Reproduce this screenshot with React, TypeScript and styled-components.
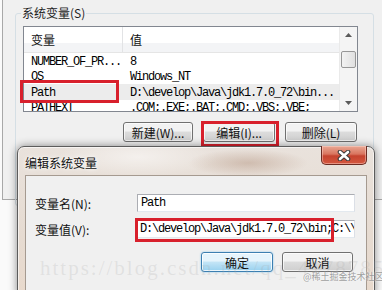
import styled, { createGlobalStyle, css } from 'styled-components';

const GlobalStyle = createGlobalStyle`
  body {
    margin: 0;
    background: #ffffff;
  }
`;

const cjk = `'Noto Sans CJK SC', 'Noto Sans', sans-serif`;
const mono = `'Liberation Mono', 'DejaVu Sans Mono', monospace`;

const Screen = styled.div`
  position: relative;
  width: 382px;
  height: 290px;
  overflow: hidden;
  background: #fafafa;
  font-family: ${cjk};
  font-size: 12px;
  color: #000;
`;

const EnvWindow = styled.div`
  margin-left: 2px;
  width: 392px;
  height: 200px;
  box-sizing: border-box;
  border-left: 1px solid #a8a8a8;
  border-bottom: 1px solid #a8a8a8;
  background: #f0f0f0;
  padding-top: 6px;
`;

const GroupBox = styled.fieldset`
  margin: 0 0 0 12px;
  width: 359px;
  height: 200px;
  box-sizing: border-box;
  padding: 0;
  border: 1px solid #d5dfe5;
  border-radius: 3px;
`;

const Legend = styled.legend`
  margin-left: 5px;
  padding: 0 1px;
  font-size: 12px;
  line-height: 14px;
  color: #1e1e1e;
`;

const ListBox = styled.div`
  display: flex;
  margin: 6px 0 0 7px;
  width: 335px;
  height: 86px;
  box-sizing: border-box;
  border: 1px solid #828790;
  background: #fff;
`;

const Table = styled.div`
  flex: 1;
  overflow: hidden;
`;

const HeaderRow = styled.div`
  display: grid;
  grid-template-columns: 99px 1fr;
  height: 25px;
  background: linear-gradient(#ffffff 0 64%, #f3f4f6 64% 100%);
  border-bottom: 1px solid #e5e5e5;
`;

const HeaderCell = styled.div<{ $divider?: boolean }>`
  display: flex;
  align-items: center;
  padding: 0 0 0 7px;
  font-size: 12px;
  color: #111;
  ${(p) =>
    p.$divider &&
    css`
      border-right: 1px solid #e2e3e5;
    `}
`;

const Row = styled.div<{ $selected?: boolean }>`
  display: grid;
  grid-template-columns: 99px 1fr;
  height: 15.5px;
  align-items: center;
  background: ${(p) => (p.$selected ? '#ececec' : 'transparent')};
`;

const Cell = styled.div`
  padding: 2px 0 0 7px;
  font-family: ${mono};
  font-size: 12px;
  letter-spacing: -1.2px;
  white-space: nowrap;
  overflow: hidden;
  line-height: 14px;
`;

const ScrollBar = styled.div`
  display: flex;
  flex-direction: column;
  width: 17px;
  background: #f4f4f4;
  border-left: 1px solid #eaeaea;
`;

const ScrollArrow = styled.div`
  height: 16px;
  display: flex;
  align-items: center;
  justify-content: center;
`;

const ScrollTrack = styled.div`
  flex: 1;
  padding-top: 8px;
`;

const Thumb = styled.div`
  margin: 0 1px;
  height: 15px;
  border: 1px solid #979797;
  border-radius: 2px;
  background: linear-gradient(90deg, #f3f3f3, #e0e0e0);
`;

const ButtonRow = styled.div<{ $gap: number }>`
  display: flex;
  justify-content: flex-end;
  gap: ${(p) => p.$gap}px;
`;

const WinButton = styled.div<{ $w: number; $default?: boolean }>`
  width: ${(p) => p.$w}px;
  height: 20px;
  box-sizing: border-box;
  display: flex;
  align-items: center;
  justify-content: center;
  border: 1px solid #707070;
  border-radius: 3px;
  font-size: 12px;
  color: #111;
  background: linear-gradient(#f2f2f2 0 45%, #dcdcdc 50%, #cfcfcf 100%);
  box-shadow: inset 0 0 0 1px rgba(255, 255, 255, 0.7);
  ${(p) =>
    p.$default &&
    css`
      border-color: #3c7fb1;
      background: linear-gradient(#e5f4fc 0 45%, #c4e5f6 50%, #98d1ef 100%);
      box-shadow: inset 0 0 0 1px rgba(255, 255, 255, 0.8), 0 0 2px #7ec3ec;
    `}
`;

const EnvButtons = styled(ButtonRow)`
  width: 335px;
  margin: 10px 0 0 7px;
  padding-right: 1px;
  box-sizing: border-box;
`;

const Dialog = styled.div`
  position: absolute;
  left: 17px;
  top: 146px;
  width: 358px;
  height: 150px;
  box-sizing: border-box;
  border: 1px solid #5c5c5c;
  border-radius: 7px 7px 0 0;
  padding: 0 7px 5px;
  background:
    radial-gradient(ellipse 60px 14px at 230px 16px, rgba(160, 120, 95, 0.35), transparent),
    radial-gradient(ellipse 80px 20px at 120px 10px, rgba(255, 255, 255, 0.5), transparent),
    linear-gradient(#e9e2dc, #e6dbd1 60%, #e8d9cc);
  box-shadow: 0 0 8px rgba(0, 0, 0, 0.45), inset 0 0 0 1px rgba(255, 255, 255, 0.6);
`;

const TitleBar = styled.div`
  display: flex;
  justify-content: space-between;
  height: 28px;
`;

const Title = styled.div`
  padding-top: 7px;
  font-size: 12px;
  color: #111;
  text-shadow: 0 0 6px #fff, 0 0 3px #fff;
`;

const CloseButton = styled.div`
  width: 46px;
  height: 19px;
  margin-top: -1px;
  box-sizing: border-box;
  display: flex;
  align-items: center;
  justify-content: center;
  border: 1px solid #6b2b22;
  border-top: none;
  border-radius: 0 0 5px 5px;
  background: linear-gradient(#e9a894 0%, #d9745e 45%, #c5432e 55%, #d4573f 100%);
  box-shadow: inset 0 0 0 1px rgba(255, 220, 210, 0.45);
`;

const ClientArea = styled.div`
  border: 1px solid #a59a90;
  background: #f0f0f0;
  padding: 18px 11px 20px 9px;
`;

const FormGrid = styled.div`
  display: grid;
  grid-template-columns: 1fr 218px;
  row-gap: 8px;
  align-items: center;
`;

const Label = styled.div`
  font-size: 12px;
  color: #111;
`;

const TextBox = styled.div`
  height: 18px;
  box-sizing: border-box;
  display: flex;
  align-items: center;
  padding-left: 3px;
  border: 1px solid #abadb3;
  border-bottom-color: #e3e9ef;
  border-right-color: #dbdfe6;
  background: #fff;
  overflow: hidden;
  white-space: nowrap;
  font-family: ${mono};
  font-size: 12px;
  letter-spacing: -1.2px;
`;

const Caret = styled.span`
  display: inline-block;
  width: 1px;
  height: 13px;
  margin-right: -1px;
  background: #000;
`;

const DialogButtons = styled(ButtonRow)`
  margin-top: 14px;
  padding-right: 2px;
`;

const Annotation = styled.div`
  position: absolute;
  box-sizing: border-box;
  border: 3px solid #d8202c;
  pointer-events: none;
`;

const Watermark = styled.div`
  position: absolute;
  left: 40px;
  top: 256px;
  font-family: 'Liberation Serif', serif;
  font-size: 21px;
  letter-spacing: 2px;
  color: rgba(170, 170, 170, 0.22);
  white-space: nowrap;
  pointer-events: none;
`;

const SiteMark = styled.div`
  position: absolute;
  left: 303px;
  top: 270px;
  font-size: 9px;
  color: rgba(140, 140, 140, 0.85);
  text-shadow: 0 0 2px #fff;
  white-space: nowrap;
`;

const vars = [
  { name: 'NUMBER_OF_PR...', value: '8' },
  { name: 'OS', value: 'Windows_NT' },
  { name: 'Path', value: 'D:\\develop\\Java\\jdk1.7.0_72\\bin...', selected: true },
  { name: 'PATHEXT', value: '.COM;.EXE;.BAT;.CMD;.VBS;.VBE;' },
];

function Triangle({ up }: { up?: boolean }) {
  return (
    <svg width="7" height="4" viewBox="0 0 7 4">
      <path d={up ? 'M0 4 L3.5 0 L7 4 Z' : 'M0 0 L3.5 4 L7 0 Z'} fill="#5a5a5a" />
    </svg>
  );
}

export default function App() {
  return (
    <>
      <GlobalStyle />
      <Screen>
        <EnvWindow>
          <GroupBox>
            <Legend>系统变量(S)</Legend>
            <ListBox>
              <Table>
                <HeaderRow>
                  <HeaderCell $divider>变量</HeaderCell>
                  <HeaderCell>值</HeaderCell>
                </HeaderRow>
                {vars.map((v) => (
                  <Row key={v.name} $selected={v.selected}>
                    <Cell>{v.name}</Cell>
                    <Cell>{v.value}</Cell>
                  </Row>
                ))}
              </Table>
              <ScrollBar>
                <ScrollArrow>
                  <Triangle up />
                </ScrollArrow>
                <ScrollTrack>
                  <Thumb />
                </ScrollTrack>
                <ScrollArrow>
                  <Triangle />
                </ScrollArrow>
              </ScrollBar>
            </ListBox>
            <EnvButtons $gap={10}>
              <WinButton $w={70}>新建(W)...</WinButton>
              <WinButton $w={72}>编辑(I)...</WinButton>
              <WinButton $w={72}>删除(L)</WinButton>
            </EnvButtons>
          </GroupBox>
        </EnvWindow>

        <Annotation style={{ left: 20, top: 80, width: 99, height: 23 }} />
        <Annotation style={{ left: 201, top: 121, width: 78, height: 26 }} />

        <Dialog>
          <TitleBar>
            <Title>编辑系统变量</Title>
            <CloseButton>
              <svg width="14" height="11" viewBox="0 0 14 11">
                <path d="M3 2 L11 9 M11 2 L3 9" stroke="#3a3a3a" strokeWidth="4.6" strokeLinecap="round" />
                <path d="M3 2 L11 9 M11 2 L3 9" stroke="#ffffff" strokeWidth="2.6" strokeLinecap="round" />
              </svg>
            </CloseButton>
          </TitleBar>
          <ClientArea>
            <FormGrid>
              <Label>变量名(N):</Label>
              <TextBox>Path</TextBox>
              <Label>变量值(V):</Label>
              <TextBox>
                <Caret />
                D:\develop\Java\jdk1.7.0_72\bin;C:\\Windows
              </TextBox>
            </FormGrid>
            <DialogButtons $gap={9}>
              <WinButton $w={72} $default>
                确定
              </WinButton>
              <WinButton $w={71}>取消</WinButton>
            </DialogButtons>
          </ClientArea>
        </Dialog>

        <Annotation style={{ left: 135, top: 218, width: 199, height: 24 }} />

        <Watermark>https://blog.csdn.net/qq_41787854</Watermark>
        <SiteMark>@稀土掘金技术社区</SiteMark>
      </Screen>
    </>
  );
}
